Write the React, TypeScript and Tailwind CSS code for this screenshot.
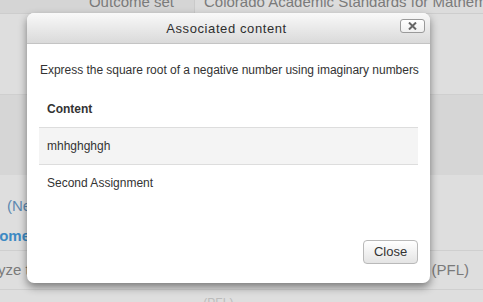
import React from "react";

export default function App() {
  const font = { fontFamily: '"Liberation Sans", Arial, Helvetica, sans-serif' };
  return (
    <div className="relative w-[483px] h-[302px] overflow-hidden bg-[#dcdcdc] text-[#888]" style={font}>
      {/* background page */}
      <div className="flex h-[14px] border-b border-[#cdcdcd]">
        <div className="w-[195px] bg-[#d5d5d5] border-r border-[#cacaca] flex justify-end pr-[20px] text-[15px] leading-[15px] -mt-[6px] text-[#7a7a7a]">
          <span>Outcome set</span>
        </div>
        <div className="flex-1 pl-[9px] text-[15px] leading-[15px] -mt-[6px] text-[#7a7a7a] whitespace-nowrap overflow-hidden">
          Colorado Academic Standards for Mathematics
        </div>
      </div>
      <div className="h-[81px] bg-[#dedede] border-b border-[#cfcfcf]" />
      <div className="h-[80px] bg-[#d6d6d6]" />
      <div className="h-[76px] bg-[#dedede] border-b border-[#cfcfcf]">
        <div className="pl-[7px] pt-[20px] text-[15px] text-[#5d89b0]">(New</div>
        <div className="pt-[7px] text-[15px] font-bold text-[#3d8ac4] -ml-[35px]">Outcome</div>
      </div>
      <div className="h-[39px] bg-[#dedede] border-b border-[#cfcfcf] flex items-center justify-between text-[15px] text-[#7a7a7a]">
        <span className="-ml-[32px]">Analyze the</span>
        <span className="mr-[14px]">(PFL)</span>
      </div>
      <div className="h-[20px] bg-[#dedede] pl-[10px] pt-[4px] text-[12px] text-[#bcbcbc] whitespace-nowrap">
        .. ... .... .. .... ....... ........ ....... . ..... .... (PFL)
      </div>

      {/* modal */}
      <div className="absolute left-[27px] top-[13px] w-[403px] h-[270px] bg-white rounded-[7px] shadow-[0_4px_9px_rgba(0,0,0,0.45)] overflow-hidden flex flex-col">
        <div className="relative h-[31px] shrink-0 bg-gradient-to-b from-[#f9f9f9] to-[#dadada] border-b border-[#c4c4c4] flex items-center justify-center">
          <span className="text-[13px] tracking-[0.6px] text-[#2e2e2e] pt-[1px] -ml-[4px]">Associated content</span>
          <div className="absolute left-[373px] top-[6px] w-[25px] h-[14px] rounded-[3px] border border-[#9a9a9a] bg-gradient-to-b from-white to-[#f0f0f0] flex items-center justify-center">
            <svg width="9" height="8" viewBox="0 0 9 8">
              <path d="M1 0.5 L8 7.5 M8 0.5 L1 7.5" stroke="#666" strokeWidth="2" />
            </svg>
          </div>
        </div>
        <div className="flex-1 flex flex-col pl-[12px] pr-[12px] pt-[17px] pb-[19px]">
          <p className="text-[12px] leading-[18px] text-[#333] pl-[1px] whitespace-nowrap tracking-[-0.03px]">
            Express the square root of a negative number using imaginary numbers
          </p>
          <table className="mt-[19px] w-full text-[12px] text-[#333] border-collapse">
            <thead>
              <tr className="border-b border-[#dddddd]">
                <th className="text-left font-bold h-[29px] align-top pt-[2px] pl-[8px] leading-[18px]">Content</th>
              </tr>
            </thead>
            <tbody>
              <tr className="bg-[#f4f4f4] border-b border-[#dddddd]">
                <td className="h-[37px] pl-[8px] leading-[18px]">mhhghghgh</td>
              </tr>
              <tr>
                <td className="h-[37px] pl-[8px] leading-[18px]">Second Assignment</td>
              </tr>
            </tbody>
          </table>
          <div className="flex-1" />
          <div className="flex justify-end">
            <button className="w-[55px] h-[24px] rounded-[4px] border border-[#b9b9b9] bg-gradient-to-b from-white to-[#e4e4e4] text-[13px] text-[#333]">
              Close
            </button>
          </div>
        </div>
      </div>
    </div>
  );
}
